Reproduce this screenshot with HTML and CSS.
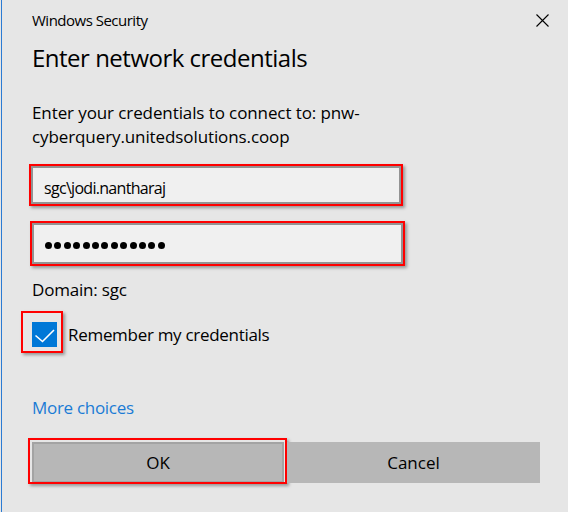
FILE: index.html
```html
<!DOCTYPE html>
<html lang="en">
<head>
<meta charset="utf-8">
<title>Windows Security</title>
<link rel="stylesheet" href="styles.css">
</head>
<body>
<div class="window">
  <header class="titlebar">
    <span class="caption">Windows Security</span>
    <span class="close" aria-label="Close">
      <svg width="13" height="13" viewBox="0 0 13 13"><path d="M0.5 0.5L12.5 12.5M12.5 0.5L0.5 12.5" stroke="#000" stroke-width="1.1" fill="none"/></svg>
    </span>
  </header>
  <main class="content">
    <h1 class="heading">Enter network credentials</h1>
    <p class="message">Enter your credentials to connect to: pnw-<br>cyberquery.unitedsolutions.coop</p>
    <div class="mark mark-user"><div class="field">sgc\jodi.nantharaj</div></div>
    <div class="mark mark-pass"><div class="field field-pass"><span class="dot"></span><span class="dot"></span><span class="dot"></span><span class="dot"></span><span class="dot"></span><span class="dot"></span><span class="dot"></span><span class="dot"></span><span class="dot"></span><span class="dot"></span><span class="dot"></span><span class="dot"></span><span class="dot"></span></div></div>
    <p class="domain">Domain: sgc</p>
    <div class="check-row">
      <span class="checkbox">
        <svg width="25" height="25" viewBox="0 0 25 25"><path d="M3.5 13.5L10.5 19.5L22 8" stroke="#fff" stroke-width="1.6" fill="none"/></svg>
        <span class="mark-check"></span>
      </span>
      <span class="check-label">Remember my credentials</span>
    </div>
    <a class="more">More choices</a>
    <div class="buttons">
      <div class="btn btn-ok">OK<span class="mark-ok"></span></div>
      <div class="btn">Cancel</div>
    </div>
  </main>
</div>
</body>
</html>
```
FILE: styles.css
```css
html, body {
  margin: 0;
  padding: 0;
  background: #e6e6e6;
}
body {
  font-family: "Open Sans", "Noto Sans", sans-serif;
  color: #000;
}
.window {
  margin-left: 1px;
  border-left: 1px solid #2b7bd3;
  min-height: 512px;
  background: #e6e6e6;
}
.titlebar {
  display: flex;
  justify-content: space-between;
  align-items: center;
  height: 40px;
  padding: 0 19px 0 30px;
}
.caption {
  font-size: 15px;
  line-height: 20px;
  letter-spacing: -0.5px;
}
.close {
  display: flex;
  width: 13px;
  height: 13px;
}
.content {
  padding-left: 30px;
  display: flex;
  flex-direction: column;
  align-items: flex-start;
}
.heading {
  margin: 1px 0 0;
  font-size: 24px;
  line-height: 34px;
  font-weight: 400;
  letter-spacing: -0.5px;
}
.message {
  margin: 26px 0 0;
  font-size: 17px;
  line-height: 24px;
  letter-spacing: -0.1px;
}
.mark {
  box-sizing: border-box;
  border: 2px solid #ff0000;
  box-shadow: 2px 2px 3px rgba(0, 0, 0, 0.35);
}
.mark-user {
  margin: 15px 0 0 -3px;
  width: 374px;
  height: 42px;
}
.mark-pass {
  margin: 15px 0 0 -2px;
  width: 375px;
  height: 45px;
}
.field {
  box-sizing: border-box;
  height: 100%;
  border: 2px solid #939393;
  background: #f0f0f0;
  display: flex;
  align-items: center;
  padding: 5px 0 0 11px;
  font-size: 16px;
  line-height: 24px;
  letter-spacing: -0.7px;
}
.field-pass {
  padding: 3px 0 0 11px;
  gap: 2.4px;
}
.dot {
  width: 7px;
  height: 7px;
  border-radius: 50%;
  background: #000;
}
.domain {
  margin: 12px 0 0;
  font-size: 17px;
  line-height: 24px;
  letter-spacing: -0.2px;
}
.check-row {
  margin-top: 20px;
  display: flex;
  align-items: center;
  gap: 11px;
}
.checkbox {
  position: relative;
  display: flex;
  width: 25px;
  height: 25px;
  background: #0078d7;
}
.mark-check {
  position: absolute;
  left: -11px;
  top: -11px;
  width: 38px;
  height: 38px;
  border: 2px solid #ff0000;
  box-shadow: 2px 2px 3px rgba(0, 0, 0, 0.35);
}
.check-label {
  font-size: 17px;
  line-height: 24px;
  letter-spacing: -0.3px;
}
.more {
  margin-top: 49px;
  font-size: 17px;
  line-height: 24px;
  letter-spacing: -0.3px;
  color: #1a7bd5;
}
.buttons {
  margin-top: 22px;
  display: flex;
  gap: 3px;
}
.btn {
  position: relative;
  box-sizing: border-box;
  width: 253px;
  height: 41px;
  background: #b7b7b7;
  display: flex;
  align-items: center;
  justify-content: center;
  font-size: 17px;
  line-height: 24px;
}
.btn-ok {
  width: 252px;
  border: 2px solid #a3a3a3;
}
.mark-ok {
  position: absolute;
  left: -6px;
  top: -6px;
  right: -5px;
  bottom: -3px;
  border: 2px solid #ff0000;
  box-shadow: 2px 2px 3px rgba(0, 0, 0, 0.35);
}
```
